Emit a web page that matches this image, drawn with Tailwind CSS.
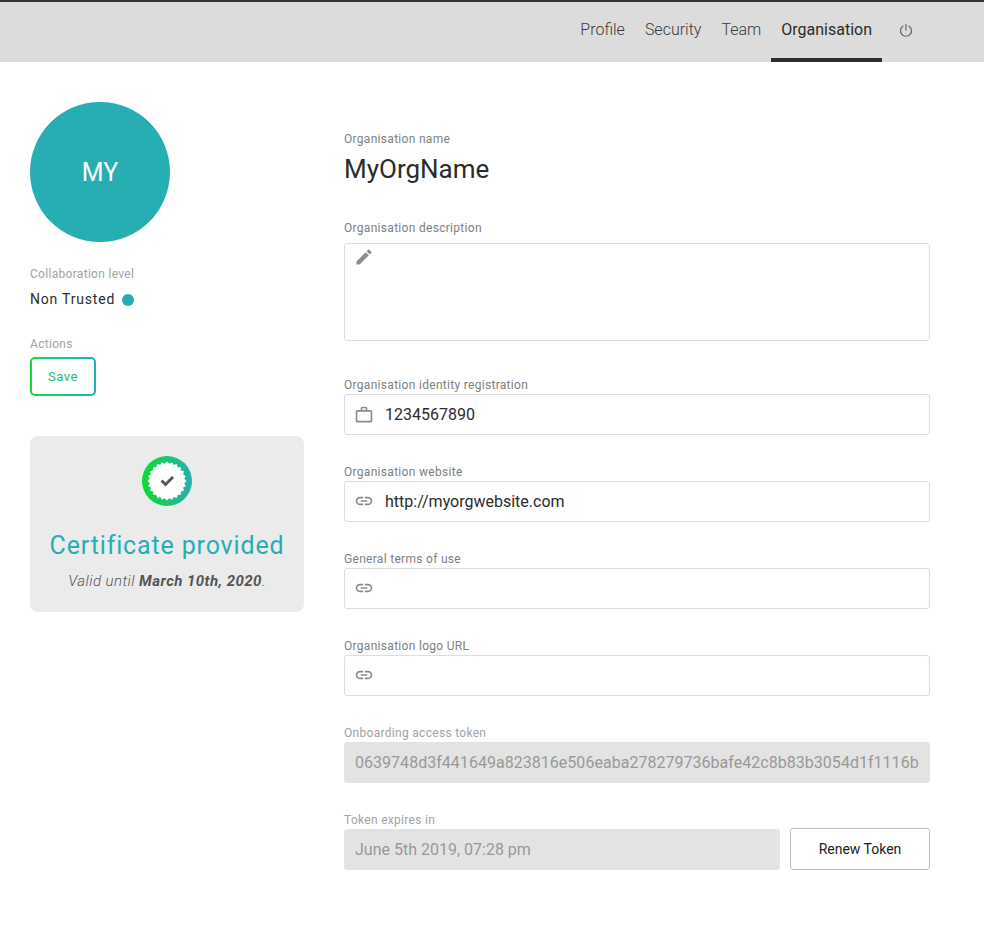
<!DOCTYPE html>
<html lang="en">
<head>
  <meta charset="UTF-8" />
  <title>Organisation</title>
  <script src="https://cdn.jsdelivr.net/npm/@tailwindcss/browser@4"></script>
</head>
<body class="bg-white text-[#2b2b2b] font-['Roboto',sans-serif]">

<!-- Navbar -->
<nav class="h-[62px] bg-[#dcdcdc] border-t-2 border-[#333333] flex justify-end pr-[58px]">
  <a class="h-[60px] px-[10px] pt-[18px] text-[16px] leading-[20px] font-light text-[#3a3a3a]">Profile</a>
  <a class="h-[60px] px-[10px] pt-[18px] text-[16px] leading-[20px] font-light text-[#3a3a3a]">Security</a>
  <a class="h-[60px] px-[10px] pt-[18px] text-[16px] leading-[20px] font-light text-[#3a3a3a]">Team</a>
  <a class="h-[60px] px-[10px] pt-[18px] text-[16px] leading-[20px] text-[#2b2b2b] border-b-4 border-[#2e2e2e]">Organisation</a>
  <div class="w-[44px] pl-[16px] pt-[20px]">
    <svg width="16" height="16" viewBox="0 0 16 16" fill="none" stroke="#666666" stroke-width="1.2" stroke-linecap="round">
      <path d="M8 2.5V8" />
      <path d="M4.9 4.2a5.5 5.5 0 1 0 6.2 0" />
    </svg>
  </div>
</nav>

<main class="flex pt-[40px]">
  <!-- Left column -->
  <aside class="w-[344px] pl-[30px] pr-[40px] shrink-0">
    <div class="w-[140px] h-[140px] pt-[1px] rounded-full bg-[#26aeb3] flex items-center justify-center text-white text-[25px]">MY</div>

    <div class="mt-[25px] text-[12px] leading-[14px] tracking-[0.3px] text-[#a3a3a3]">Collaboration level</div>
    <div class="mt-[8px] flex items-center gap-[7px] text-[14px] leading-[20px] tracking-[0.8px]">
      Non Trusted
      <span class="mt-[1px] w-[12px] h-[12px] rounded-full bg-[#26aeb3]"></span>
    </div>

    <div class="mt-[28px] text-[12px] leading-[14px] tracking-[0.3px] text-[#a3a3a3]">Actions</div>
    <div class="mt-[6px] w-[66px] h-[39px] p-[2px] rounded-[5px] bg-gradient-to-r from-[#0fdc2e] to-[#26aeb3]">
      <button class="w-full h-full rounded-[3px] bg-white text-[13px] tracking-[0.5px] text-[#20bd85]">Save</button>
    </div>

    <div class="mt-[40px] h-[176px] rounded-[8px] bg-[#ebebeb] flex flex-col items-center pt-[20px]">
      <svg width="50" height="50" viewBox="0 0 50 50">
        <defs>
          <linearGradient id="ring" x1="0" y1="0" x2="1" y2="0">
            <stop offset="0" stop-color="#0fdc2e" />
            <stop offset="1" stop-color="#26aeb3" />
          </linearGradient>
        </defs>
        <circle cx="25" cy="25" r="25" fill="url(#ring)" />
        <g fill="#ffffff">
          <rect x="11.2" y="11.2" width="27.6" height="27.6" />
          <rect x="11.2" y="11.2" width="27.6" height="27.6" transform="rotate(15 25 25)" />
          <rect x="11.2" y="11.2" width="27.6" height="27.6" transform="rotate(30 25 25)" />
          <rect x="11.2" y="11.2" width="27.6" height="27.6" transform="rotate(45 25 25)" />
          <rect x="11.2" y="11.2" width="27.6" height="27.6" transform="rotate(60 25 25)" />
          <rect x="11.2" y="11.2" width="27.6" height="27.6" transform="rotate(75 25 25)" />
        </g>
        <path d="M18.5 25.5l2-2 3 3 6.5-6.5 2 2-8.5 8.5z" fill="#555555" />
      </svg>
      <div class="mt-[22px] text-[25px] leading-[36px] tracking-[0.85px] text-[#26aeb3]">Certificate provided</div>
      <div class="mt-[7px] text-[15px] leading-[20px] tracking-[0.45px] italic font-light text-[#555555]">Valid until <b class="font-bold">March 10th, 2020</b>.</div>
    </div>
  </aside>

  <!-- Form -->
  <section class="w-[586px] pt-[30px]">
    <div class="h-[14px] text-[12px] leading-[14px] tracking-[0.3px] text-[#808080]">Organisation name</div>
    <div class="mt-[7px] h-[32px] text-[26px] leading-[32px]">MyOrgName</div>

    <div class="mt-[36px] h-[14px] text-[12px] leading-[14px] tracking-[0.3px] text-[#808080]">Organisation description</div>
    <div class="mt-[8px] h-[98px] border border-[#dddddd] rounded-[3px] pl-[9px] pt-[3px]">
      <svg width="20" height="20" viewBox="0 0 24 24" fill="#8c8c8c"><path d="M3 17.25V21h3.75L17.81 9.94l-3.75-3.75L3 17.25zM20.71 7.04a1 1 0 0 0 0-1.41l-2.34-2.34a1 1 0 0 0-1.41 0l-1.83 1.83 3.75 3.75 1.83-1.83z" /></svg>
    </div>

    <div class="mt-[37px] h-[14px] text-[12px] leading-[14px] tracking-[0.3px] text-[#808080]">Organisation identity registration</div>
    <div class="mt-[2px] h-[41px] border border-[#dddddd] rounded-[3px] flex items-center pl-[9px] gap-[11px] text-[16px]">
      <svg width="20" height="20" viewBox="0 0 24 24" fill="#8c8c8c"><path d="M14 6V4h-4v2h4zM4 8v11h16V8H4zm16-2c1.11 0 2 .89 2 2v11c0 1.11-.89 2-2 2H4c-1.11 0-2-.89-2-2l.01-11c0-1.11.88-2 1.99-2h4V4c0-1.11.89-2 2-2h4c1.11 0 2 .89 2 2v2h4z" /></svg>
      1234567890
    </div>

    <div class="mt-[30px] h-[14px] text-[12px] leading-[14px] tracking-[0.3px] text-[#808080]">Organisation website</div>
    <div class="mt-[2px] h-[41px] border border-[#dddddd] rounded-[3px] flex items-center pl-[9px] gap-[11px] text-[16px]">
      <svg class="-mt-[1px]" width="20" height="20" viewBox="0 0 24 24" fill="#8c8c8c"><path d="M3.9 12c0-1.71 1.39-3.1 3.1-3.1h4V7H7c-2.76 0-5 2.24-5 5s2.24 5 5 5h4v-1.9H7c-1.71 0-3.1-1.39-3.1-3.1zM8 13h8v-2H8v2zm9-6h-4v1.9h4c1.71 0 3.1 1.39 3.1 3.1s-1.39 3.1-3.1 3.1h-4V17h4c2.76 0 5-2.24 5-5s-2.24-5-5-5z" /></svg>
      http://myorgwebsite.com
    </div>

    <div class="mt-[30px] h-[14px] text-[12px] leading-[14px] tracking-[0.3px] text-[#808080]">General terms of use</div>
    <div class="mt-[2px] h-[41px] border border-[#dddddd] rounded-[3px] flex items-center pl-[9px]">
      <svg class="-mt-[1px]" width="20" height="20" viewBox="0 0 24 24" fill="#8c8c8c"><path d="M3.9 12c0-1.71 1.39-3.1 3.1-3.1h4V7H7c-2.76 0-5 2.24-5 5s2.24 5 5 5h4v-1.9H7c-1.71 0-3.1-1.39-3.1-3.1zM8 13h8v-2H8v2zm9-6h-4v1.9h4c1.71 0 3.1 1.39 3.1 3.1s-1.39 3.1-3.1 3.1h-4V17h4c2.76 0 5-2.24 5-5s-2.24-5-5-5z" /></svg>
    </div>

    <div class="mt-[30px] h-[14px] text-[12px] leading-[14px] tracking-[0.3px] text-[#808080]">Organisation logo URL</div>
    <div class="mt-[2px] h-[41px] border border-[#dddddd] rounded-[3px] flex items-center pl-[9px]">
      <svg class="-mt-[1px]" width="20" height="20" viewBox="0 0 24 24" fill="#8c8c8c"><path d="M3.9 12c0-1.71 1.39-3.1 3.1-3.1h4V7H7c-2.76 0-5 2.24-5 5s2.24 5 5 5h4v-1.9H7c-1.71 0-3.1-1.39-3.1-3.1zM8 13h8v-2H8v2zm9-6h-4v1.9h4c1.71 0 3.1 1.39 3.1 3.1s-1.39 3.1-3.1 3.1h-4V17h4c2.76 0 5-2.24 5-5s-2.24-5-5-5z" /></svg>
    </div>

    <div class="mt-[30px] h-[14px] text-[12px] leading-[14px] tracking-[0.3px] text-[#a3a3a3]">Onboarding access token</div>
    <div class="mt-[2px] h-[41px] rounded-[3px] bg-[#e3e3e3] flex items-center px-[11px] text-[16px] tracking-[0.03px] text-[#999999] overflow-hidden whitespace-nowrap">0639748d3f441649a823816e506eaba278279736bafe42c8b83b3054d1f1116b</div>

    <div class="mt-[30px] h-[14px] text-[12px] leading-[14px] tracking-[0.3px] text-[#a3a3a3]">Token expires in</div>
    <div class="mt-[1px] flex gap-[10px] items-end">
      <div class="flex-1 h-[41px] rounded-[3px] bg-[#e3e3e3] flex items-center px-[11px] text-[16px] text-[#999999]">June 5th 2019, 07:28 pm</div>
      <button class="w-[140px] h-[42px] rounded-[3px] border border-[#bbbbbb] bg-white text-[14px] text-[#222222]">Renew Token</button>
    </div>
  </section>
</main>

</body>
</html>
